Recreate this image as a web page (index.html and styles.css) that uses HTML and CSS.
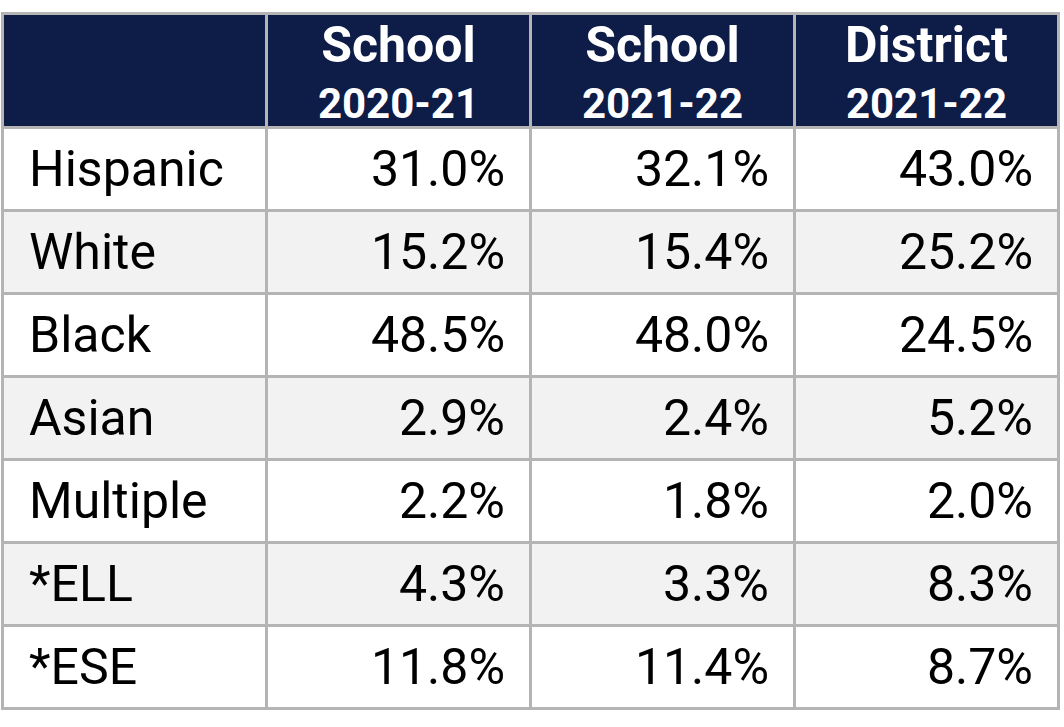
FILE: index.html
```html
<!DOCTYPE html>
<html>
<head>
<meta charset="utf-8">
<link rel="stylesheet" href="styles.css">
</head>
<body>
<table class="stats">
  <thead>
    <tr>
      <th class="blank"></th>
      <th><span class="h1">School</span><span class="h2">2020-21</span></th>
      <th><span class="h1">School</span><span class="h2">2021-22</span></th>
      <th><span class="h1">District</span><span class="h2">2021-22</span></th>
    </tr>
  </thead>
  <tbody>
    <tr><td class="label">Hispanic</td><td>31.0%</td><td>32.1%</td><td>43.0%</td></tr>
    <tr><td class="label">White</td><td>15.2%</td><td>15.4%</td><td>25.2%</td></tr>
    <tr><td class="label">Black</td><td>48.5%</td><td>48.0%</td><td>24.5%</td></tr>
    <tr><td class="label">Asian</td><td>2.9%</td><td>2.4%</td><td>5.2%</td></tr>
    <tr><td class="label">Multiple</td><td>2.2%</td><td>1.8%</td><td>2.0%</td></tr>
    <tr><td class="label">*ELL</td><td>4.3%</td><td>3.3%</td><td>8.3%</td></tr>
    <tr><td class="label">*ESE</td><td>11.8%</td><td>11.4%</td><td>8.7%</td></tr>
  </tbody>
</table>
</body>
</html>
```
FILE: styles.css
```css
html, body {
  margin: 0;
  padding: 0;
  background: #ffffff;
}
body {
  padding: 12px 0 0 1px;
  font-family: Roboto, "Liberation Sans", sans-serif;
}
.stats {
  border-collapse: collapse;
  width: 1059px;
  table-layout: fixed;
  border: 3px solid #b4b4b4;
}
.stats th, .stats td {
  border: 3px solid #b4b4b4;
  padding: 0;
}
.stats th {
  background: #0e1c48;
  color: #ffffff;
  height: 111px;
  text-align: center;
  vertical-align: top;
  font-weight: 700;
}
.h1 {
  display: block;
  font-size: 50px;
  line-height: 56px;
  padding-top: 2px;
}
.h2 {
  display: block;
  font-size: 42px;
  line-height: 44px;
  margin-top: 9px;
}
.stats td {
  height: 80px;
  font-size: 50px;
  color: #000000;
  text-align: right;
  padding-right: 24px;
  vertical-align: middle;
}
.stats td.label {
  text-align: left;
  padding-left: 25px;
  padding-right: 0;
}
.stats tbody tr:nth-child(even) td {
  background: #f2f2f2;
}
```
